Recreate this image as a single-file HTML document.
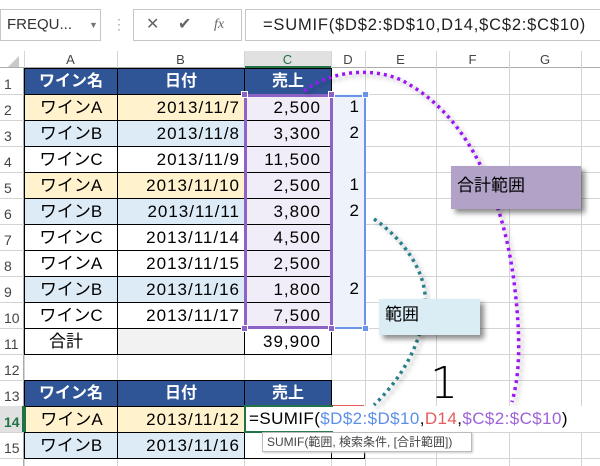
<!DOCTYPE html>
<html><head><meta charset="utf-8"><style>
body{margin:0;width:600px;height:466px;overflow:hidden;background:#fff;font-family:"Liberation Sans","Noto Sans CJK JP",sans-serif;position:relative}
div{position:absolute;box-sizing:border-box}
.gv{width:1px;background:#d4d4d4;top:51px;height:415px}
.gh{height:1px;background:#d4d4d4;left:0;width:600px}
.rh{left:0;width:24px;font-size:14px;color:#444;text-align:left;padding-left:4px;height:26px;line-height:32px}
.ch{top:51px;height:17px;font-size:13px;color:#444;text-align:center;line-height:17px}
.c{height:27px;border:1px solid #000;font-size:17px;line-height:26px;white-space:nowrap;overflow:visible}
.hd{background:#2f5597;color:#fff;font-weight:bold;text-align:center;font-size:16px}
.a{left:24px;width:94px;text-align:center}
.b{left:117px;width:128px;text-align:right;padding-right:4px;letter-spacing:1px}
.cc{left:244px;width:88px;text-align:right;padding-right:10px;letter-spacing:1px}
.y{background:#fff2cc}.bl{background:#ddebf7}
.d{left:331px;width:34px;text-align:right;padding-right:6px;font-size:17px;height:26px;line-height:26px}
</style></head><body>
<div style="left:0;top:9px;width:101px;height:32px;border:1px solid #c6c6c6;font-size:15px;line-height:30px;padding-left:6px;color:#333">FREQU...<span style="position:absolute;left:88px;top:0;font-size:9px;color:#777">▼</span></div>
<div style="left:112px;top:14px;font-size:14px;color:#aaa;line-height:20px">⋮</div>
<div style="left:133px;top:9px;width:109px;height:32px;border:1px solid #c6c6c6;font-size:16px;line-height:30px;color:#666"><span style="position:absolute;left:12px">✕</span><span style="position:absolute;left:44px">✔</span><span style="position:absolute;left:80px;font-style:italic;font-family:'Liberation Serif',serif;font-size:14px">fx</span></div>
<div style="left:245px;top:9px;width:360px;height:32px;border:1px solid #c6c6c6;font-size:16.5px;line-height:30px;padding-left:17px;color:#222;letter-spacing:0.8px;white-space:nowrap">=SUMIF($D$2:$D$10,D14,$C$2:$C$10)</div>
<div style="left:0;top:51px;width:600px;height:17px;background:#fff;border-bottom:1px solid #ababab"></div>
<div style="left:244px;top:51px;width:87px;height:17px;background:#e1e1e1;border-bottom:2px solid #217346"></div>
<div style="left:8px;top:56px;width:0;height:0;border-left:11px solid transparent;border-bottom:11px solid #c8c8c8"></div>
<div class="ch" style="left:24px;width:93px">A</div><div class="ch" style="left:117px;width:127px">B</div>
<div class="ch" style="left:244px;width:87px;color:#217346">C</div><div class="ch" style="left:331px;width:34px">D</div>
<div class="ch" style="left:365px;width:71px">E</div><div class="ch" style="left:436px;width:73px">F</div><div class="ch" style="left:509px;width:72px">G</div>
<div style="left:0;top:68px;width:24px;height:398px;background:#fff;border-right:1px solid #ababab"></div>
<div class="gv" style="left:24px"></div><div class="gv" style="left:117px"></div><div class="gv" style="left:244px"></div><div class="gv" style="left:331px"></div><div class="gv" style="left:365px"></div><div class="gv" style="left:436px"></div><div class="gv" style="left:509px"></div><div class="gv" style="left:581px"></div>
<div class="gh" style="top:94px"></div><div class="gh" style="top:120px"></div><div class="gh" style="top:146px"></div><div class="gh" style="top:172px"></div><div class="gh" style="top:198px"></div><div class="gh" style="top:224px"></div><div class="gh" style="top:250px"></div><div class="gh" style="top:276px"></div><div class="gh" style="top:302px"></div><div class="gh" style="top:328px"></div><div class="gh" style="top:354px"></div><div class="gh" style="top:380px"></div><div class="gh" style="top:406px"></div><div class="gh" style="top:432px"></div><div class="gh" style="top:458px"></div>
<div class="rh" style="top:68px">1</div><div class="rh" style="top:94px">2</div><div class="rh" style="top:120px">3</div><div class="rh" style="top:146px">4</div><div class="rh" style="top:172px">5</div><div class="rh" style="top:198px">6</div><div class="rh" style="top:224px">7</div><div class="rh" style="top:250px">8</div><div class="rh" style="top:276px">9</div><div class="rh" style="top:302px">10</div><div class="rh" style="top:328px">11</div><div class="rh" style="top:354px">12</div><div class="rh" style="top:380px">13</div>
<div class="rh" style="top:406px;background:#e1e1e1;color:#217346;font-weight:bold;width:24px;border-right:2px solid #217346">14</div><div class="rh" style="top:432px">15</div>
<div class="c hd a" style="top:68px">ワイン名</div><div class="c hd b" style="top:68px;text-align:center;padding:0;letter-spacing:0">日付</div><div class="c hd cc" style="top:68px;text-align:center;padding:0;letter-spacing:0">売上</div>
<div class="c a y" style="top:94px">ワインA</div><div class="c b y" style="top:94px">2013/11/7</div>
<div class="c a bl" style="top:120px">ワインB</div><div class="c b bl" style="top:120px">2013/11/8</div>
<div class="c a" style="top:146px">ワインC</div><div class="c b" style="top:146px">2013/11/9</div>
<div class="c a y" style="top:172px">ワインA</div><div class="c b y" style="top:172px">2013/11/10</div>
<div class="c a bl" style="top:198px">ワインB</div><div class="c b bl" style="top:198px">2013/11/11</div>
<div class="c a" style="top:224px">ワインC</div><div class="c b" style="top:224px">2013/11/14</div>
<div class="c a" style="top:250px">ワインA</div><div class="c b" style="top:250px">2013/11/15</div>
<div class="c a bl" style="top:276px">ワインB</div><div class="c b bl" style="top:276px">2013/11/16</div>
<div class="c a" style="top:302px">ワインC</div><div class="c b" style="top:302px">2013/11/17</div>
<div class="c a" style="top:328px;text-align:left;padding-left:24px">合計</div><div class="c b" style="top:328px;background:#f2f2f2"></div>
<div style="left:244px;top:94px;width:121px;height:234px;background:#eef2fb"></div>
<div class="c cc" style="top:94px;background:#f1edf8">2,500</div><div class="c cc" style="top:120px;background:#f1edf8">3,300</div><div class="c cc" style="top:146px;background:#f1edf8">11,500</div><div class="c cc" style="top:172px;background:#f1edf8">2,500</div><div class="c cc" style="top:198px;background:#f1edf8">3,800</div><div class="c cc" style="top:224px;background:#f1edf8">4,500</div><div class="c cc" style="top:250px;background:#f1edf8">2,500</div><div class="c cc" style="top:276px;background:#f1edf8">1,800</div><div class="c cc" style="top:302px;background:#f1edf8">7,500</div><div class="c cc" style="top:328px">39,900</div>
<div class="d" style="top:94px">1</div><div class="d" style="top:120px">2</div><div class="d" style="top:172px">1</div><div class="d" style="top:198px">2</div><div class="d" style="top:276px">2</div>
<div style="left:331px;top:95px;width:35px;height:234px;border:2px solid #6b93e8;border-left:none"></div>
<div style="left:244px;top:94px;width:89px;height:235px;border:3px solid #8e63c6"></div>
<div style="left:241px;top:91px;width:7px;height:7px;background:#8e63c6;border:1px solid #fff"></div><div style="left:328px;top:91px;width:7px;height:7px;background:#8e63c6;border:1px solid #fff"></div><div style="left:241px;top:325px;width:7px;height:7px;background:#8e63c6;border:1px solid #fff"></div><div style="left:328px;top:325px;width:7px;height:7px;background:#8e63c6;border:1px solid #fff"></div>
<div style="left:362px;top:91px;width:7px;height:7px;background:#6b93e8;border:1px solid #fff"></div><div style="left:362px;top:325px;width:7px;height:7px;background:#6b93e8;border:1px solid #fff"></div>
<div class="c hd a" style="top:380px">ワイン名</div><div class="c hd b" style="top:380px;text-align:center;padding:0;letter-spacing:0">日付</div><div class="c hd cc" style="top:380px;text-align:center;padding:0;letter-spacing:0">売上</div>
<div class="c a y" style="top:406px;border-left:2px solid #217346">ワインA</div><div class="c b y" style="top:406px">2013/11/12</div>
<div class="c a bl" style="top:432px">ワインB</div><div class="c b bl" style="top:432px">2013/11/16</div><div class="c cc" style="top:432px"></div>
<div style="left:331px;top:432px;width:34px;height:27px;border:1px solid #000;border-left:none"></div>
<div style="left:331px;top:405px;width:33px;height:27px;border:2px solid #e8595c"></div>
<div style="left:244px;top:406px;width:362px;height:26px;background:#fff;font-size:17px;line-height:26px;padding-left:5px;white-space:nowrap;color:#000;letter-spacing:0.4px">=SUMIF(<span style="color:#5b8fe8">$D$2:$D$10</span>,<span style="color:#e8595c">D14</span>,<span style="color:#9d63d6">$C$2:$C$10</span>)</div>
<div style="left:244px;top:405px;width:89px;height:28px;border:2px solid #217346;border-right:none"></div>
<div style="left:262px;top:432px;width:210px;height:20px;background:#fff;border:1px solid #bbb;font-size:12px;line-height:18px;padding-left:4px;color:#444;box-shadow:1px 1px 2px #ccc;white-space:nowrap">SUMIF(範囲, 検索条件, [合計範囲])</div>
<svg style="position:absolute;left:0;top:0" width="600" height="466">
<defs><filter id="s"><feDropShadow dx="3" dy="3" stdDeviation="2" flood-color="#000" flood-opacity="0.3"/></filter></defs>
<path d="M304 91 C330 70,380 65,410 85 C470 120,505 200,515 290 C522 350,518 380,512 402" fill="none" stroke="#9b15f5" stroke-width="3.5" stroke-dasharray="3 4" filter="url(#s)"/>
<path d="M374 219 C405 240,428 275,425 305 C422 345,400 380,374 405" fill="none" stroke="#2a7f8c" stroke-width="3.5" stroke-dasharray="3 4" filter="url(#s)"/>
</svg>
<div style="left:451px;top:166px;width:130px;height:43px;background:#b3a2c7;box-shadow:4px 4px 5px rgba(0,0,0,.45);font-size:17px;line-height:40px;padding-left:6px;color:#000">合計範囲</div>
<div style="left:379px;top:299px;width:101px;height:36px;background:#daedf4;box-shadow:4px 4px 5px rgba(0,0,0,.45);font-size:17px;line-height:32px;padding-left:6px;color:#000">範囲</div>
<div style="left:430px;top:360px;font-size:44px;line-height:48px;color:#000;font-family:'DejaVu Sans',sans-serif;font-weight:300">1</div>
</body></html>
